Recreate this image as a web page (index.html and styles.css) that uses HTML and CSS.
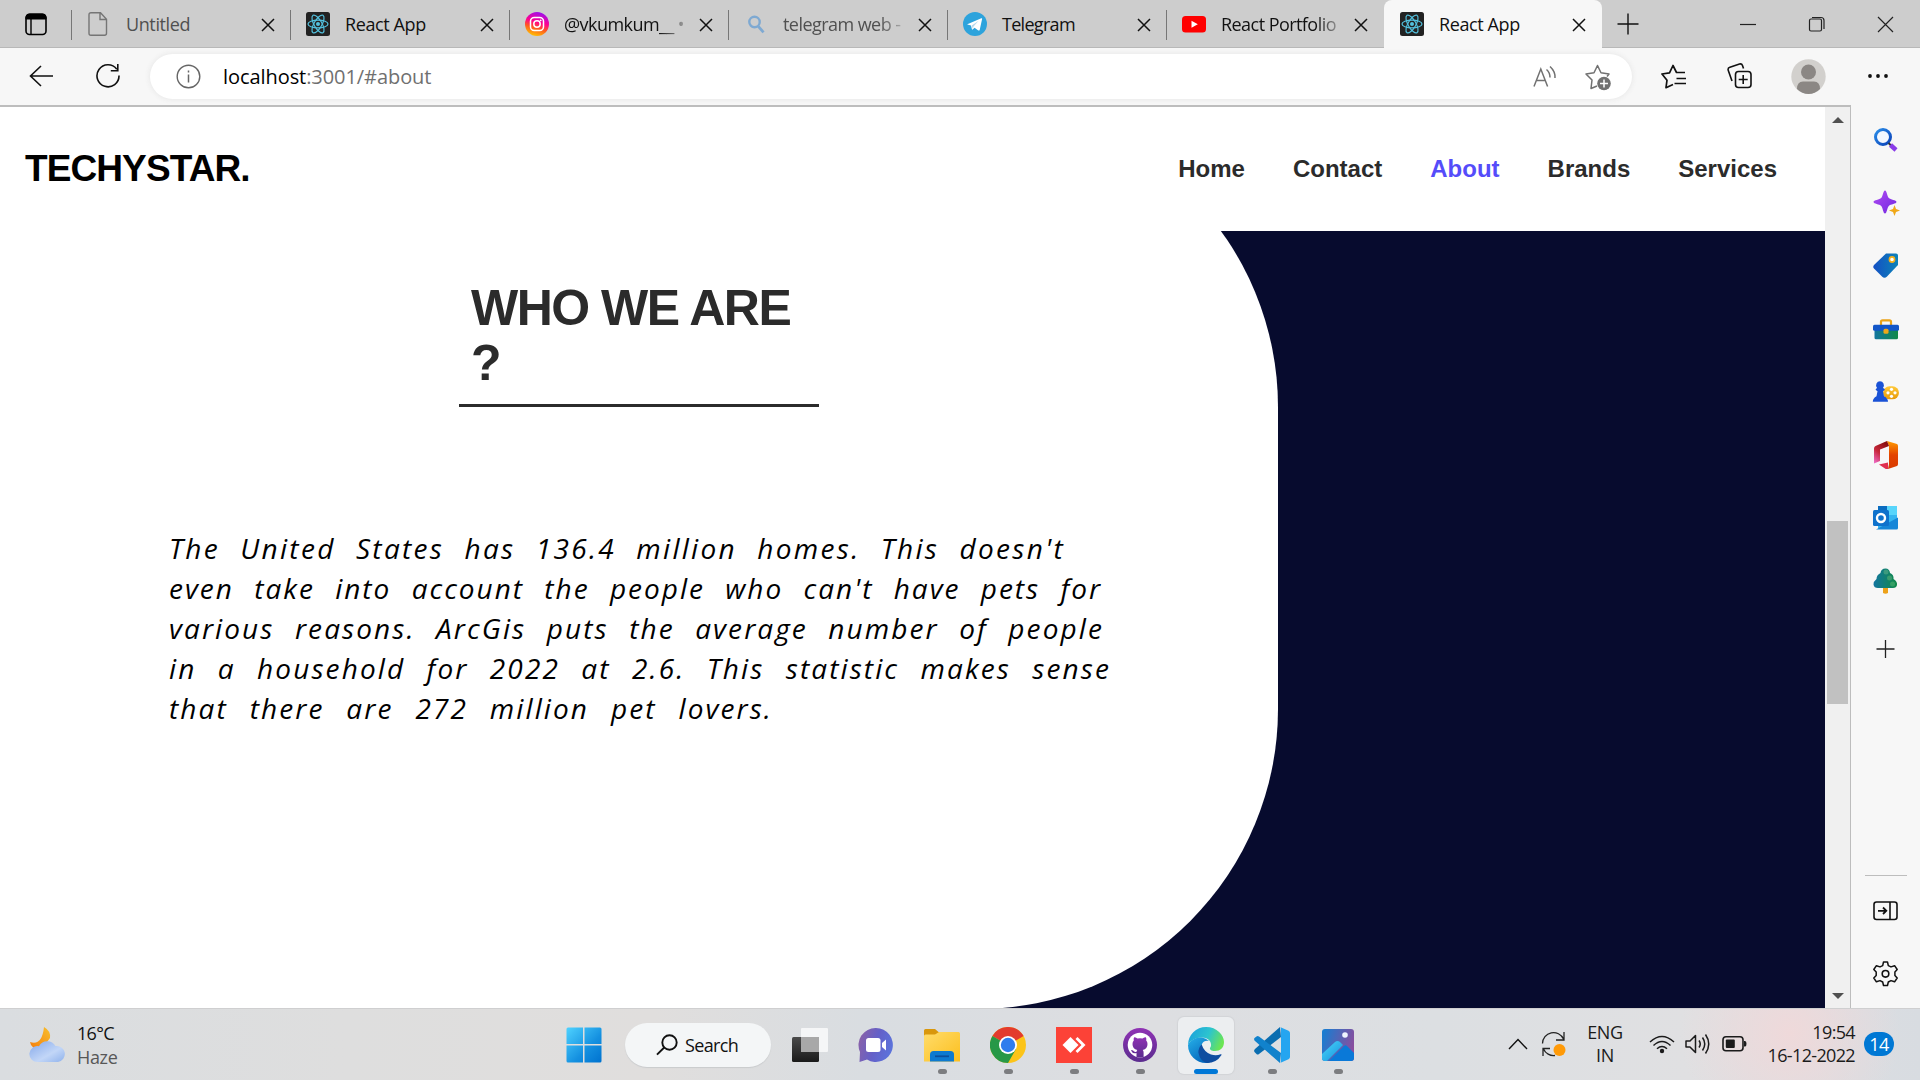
FILE: index.html
```html
<!DOCTYPE html>
<html lang="en">
<head>
<meta charset="utf-8">
<title>React App</title>
<link rel="stylesheet" href="styles.css">
</head>
<body>
<svg class="defs" width="0" height="0" aria-hidden="true">
  <defs>
    <linearGradient id="insta" x1="0.3" y1="1" x2="0.6" y2="0"><stop offset="0" stop-color="#ffc800"/><stop offset=".35" stop-color="#ff5a1f"/><stop offset=".6" stop-color="#ff0090"/><stop offset="1" stop-color="#9a12ee"/></linearGradient>
    <linearGradient id="win" x1="0" y1="0" x2="1" y2="1"><stop offset="0" stop-color="#4fd2ff"/><stop offset=".6" stop-color="#1490e0"/><stop offset="1" stop-color="#0072cf"/></linearGradient>
    <linearGradient id="blue" x1="0" y1="0" x2="1" y2="1"><stop offset="0" stop-color="#2b8de8"/><stop offset="1" stop-color="#0a41b8"/></linearGradient>
    <linearGradient id="tag" x1="0" y1="0" x2="1" y2="0"><stop offset="0" stop-color="#1450c4"/><stop offset="1" stop-color="#0c82b8"/></linearGradient>
    <linearGradient id="violet" x1="0" y1="0" x2="1" y2="1"><stop offset="0" stop-color="#b04bf2"/><stop offset="1" stop-color="#7028e0"/></linearGradient>
    <linearGradient id="green" x1="0" y1="0" x2="1" y2="0"><stop offset="0" stop-color="#1275a0"/><stop offset="1" stop-color="#128a48"/></linearGradient>
    <linearGradient id="gold" x1="0" y1="0" x2="0" y2="1"><stop offset="0" stop-color="#ffc93a"/><stop offset="1" stop-color="#e89a08"/></linearGradient>
    <linearGradient id="office" x1="0" y1="0" x2="0" y2="1"><stop offset="0" stop-color="#ff9a00"/><stop offset=".5" stop-color="#e34300"/><stop offset="1" stop-color="#d83b01"/></linearGradient>
    <linearGradient id="officeL" x1="0.6" y1="0" x2="0" y2="1"><stop offset="0" stop-color="#8a0f10"/><stop offset=".5" stop-color="#c8283c"/><stop offset="1" stop-color="#f070d0"/></linearGradient>
    <linearGradient id="chat" x1="0" y1="0.3" x2="1" y2="0.6"><stop offset="0" stop-color="#8a62a8"/><stop offset=".5" stop-color="#6460c8"/><stop offset="1" stop-color="#5b74dc"/></linearGradient>
    <linearGradient id="folder" x1="0" y1="0" x2="1" y2="1"><stop offset="0" stop-color="#ffdc6b"/><stop offset="1" stop-color="#fcbf1e"/></linearGradient>
    <linearGradient id="edgeTop" x1="0" y1="0.2" x2="1" y2="0.5"><stop offset="0" stop-color="#1ba0dc"/><stop offset=".55" stop-color="#2cc4cf"/><stop offset="1" stop-color="#6be553"/></linearGradient>
    <linearGradient id="edgeL" x1="0" y1="0" x2="0.6" y2="1"><stop offset="0" stop-color="#27b0e8"/><stop offset="1" stop-color="#0468bd"/></linearGradient>
    <linearGradient id="github" x1="0" y1="0" x2="0" y2="1"><stop offset="0" stop-color="#8f32b4"/><stop offset="1" stop-color="#5b2d8f"/></linearGradient>
    <linearGradient id="photo" x1="0" y1="0.3" x2="1" y2="0.6"><stop offset="0" stop-color="#1a7cd0"/><stop offset="1" stop-color="#8d4c9c"/></linearGradient>
    <linearGradient id="hill" x1="0" y1="0" x2="1" y2="1"><stop offset="0" stop-color="#4ad6f7"/><stop offset="1" stop-color="#1590e0"/></linearGradient>
    <linearGradient id="cloud" x1="0" y1="0" x2="1" y2="1"><stop offset="0" stop-color="#84a8ea"/><stop offset=".6" stop-color="#c2d6f7"/><stop offset="1" stop-color="#8fb2ec"/></linearGradient>
    <linearGradient id="moon" x1="0" y1="1" x2="1" y2="0"><stop offset="0" stop-color="#f47b0a"/><stop offset="1" stop-color="#f8c02e"/></linearGradient>
    <linearGradient id="dark" x1="0" y1="0" x2="0" y2="1"><stop offset="0" stop-color="#4a4a4a"/><stop offset="1" stop-color="#1a1a1a"/></linearGradient>
    <symbol id="react" viewBox="0 0 24 24"><rect width="24" height="24" rx="2.5" fill="#222"/><g fill="none" stroke="#53c1de" stroke-width="1.2"><ellipse cx="12" cy="12" rx="10" ry="3.9"/><ellipse cx="12" cy="12" rx="10" ry="3.9" transform="rotate(60 12 12)"/><ellipse cx="12" cy="12" rx="10" ry="3.9" transform="rotate(120 12 12)"/></g><circle cx="12" cy="12" r="2" fill="#53c1de"/></symbol>
    <symbol id="x" viewBox="0 0 14 14"><path d="M1 1l12 12M13 1L1 13" fill="none" stroke="#111" stroke-width="1.5"/></symbol>
  </defs>
</svg>

<div class="screen">
  <div class="tabstrip">
    <svg class="workspaces" width="22" height="23" viewBox="0 0 22 23"><rect x="1" y="1.2" width="20" height="20.3" rx="3.5" fill="none" stroke="#000" stroke-width="1.6"/><path d="M1 6V4.500Q1 1 4.500 1h13Q21 1 21 4.500V6z" stroke="#000"/><path d="M6 6v15" stroke="#000" stroke-width="1.4"/></svg>
    <div class="tab"><svg class="fav" viewBox="0 0 24 24"><path d="M5.500.8h8l6 6.500v14q0 2-2 2H4q-2 0-2-2v-18.500q0-2 2-2zM13 1v6.500h6.500" fill="none" stroke="#757575" stroke-width="1.4"/></svg><span class="tab-title dim">Untitled</span><svg class="tab-x"><use href="#x"/></svg></div>
    <div class="tab"><svg class="fav"><use href="#react"/></svg><span class="tab-title">React App</span><svg class="tab-x"><use href="#x"/></svg></div>
    <div class="tab"><svg class="fav" viewBox="0 0 24 24"><circle cx="12" cy="12" r="12" fill="url(#insta)"/><rect x="5.500" y="5.500" width="13" height="13" rx="3.800" fill="none" stroke="#fff" stroke-width="1.500"/><circle cx="12" cy="12" r="3.200" fill="none" stroke="#fff" stroke-width="1.500"/><circle cx="15.700" cy="8.300" r=".9" fill="#fff"/></svg><span class="tab-title fade tight">@vkumkum__ •</span><svg class="tab-x"><use href="#x"/></svg></div>
    <div class="tab"><svg class="fav" viewBox="0 0 24 24"><circle cx="10.500" cy="10" r="5.200" fill="none" stroke="#7ea9d2" stroke-width="2.400"/><path d="M14.300 14.300l5.200 6" stroke="#7ea9d2" stroke-width="2.800"/></svg><span class="tab-title dim fade tight">telegram web -</span><svg class="tab-x"><use href="#x"/></svg></div>
    <div class="tab"><svg class="fav" viewBox="0 0 24 24"><circle cx="12" cy="12" r="12" fill="#2da3dc"/><path d="M4.300 12.200L18.300 6.300q1-.3.8.8l-2.400 10.800q-.4 1.100-1.400.5l-3.700-2.700-2 1.900q-.5.4-.7-.3l-.9-3.700-3.600-1.100q-.6-.2-.1-.3z" fill="#fff"/><path d="M8.700 13.400l7-4.700-5.200 5.700-.7 2.400z" fill="#b7d9ec"/></svg><span class="tab-title telegram">Telegram</span><svg class="tab-x"><use href="#x"/></svg></div>
    <div class="tab narrow"><svg class="fav" viewBox="0 0 24 24"><rect y="4" width="24" height="16.500" rx="3.500" fill="#f00"/><path d="M9.500 8.700v7l6.300-3.500z" fill="#fff"/></svg><span class="tab-title fade tight">React Portfolio</span><svg class="tab-x"><use href="#x"/></svg></div>
    <div class="tab narrow active"><svg class="fav"><use href="#react"/></svg><span class="tab-title">React App</span><svg class="tab-x"><use href="#x"/></svg></div>
    <svg class="newtab" width="22" height="22" viewBox="0 0 22 22"><path d="M11 .5v21M.5 11h21" stroke="#111" stroke-width="1.400"/></svg>
    <svg class="winbtns" width="154" height="18" viewBox="0 0 154 18"><g fill="none" stroke="#222" stroke-width="1.200"><path d="M0 9.500h16"/><rect x="69.500" y="4" width="12" height="12" rx="1.500"/><path d="M72 2.500h9q3 0 3 3v8.500"/><path d="M138 2l15 15M153 2l-15 15"/></g></svg>
  </div>

  <div class="toolbar">
    <svg class="back" width="25" height="22" viewBox="0 0 25 22"><path d="M24 11H1.500M12 1L1.500 11 12 21" fill="none" stroke="#111" stroke-width="1.600"/></svg>
    <svg class="reload" width="26" height="26" viewBox="0 0 26 26"><path d="M21.800 6.200A11 11 0 1 0 24 12.500M22.800 1v6.800h-7" fill="none" stroke="#111" stroke-width="1.600"/></svg>
    <div class="address">
      <svg width="25" height="25" viewBox="0 0 25 25"><circle cx="12.500" cy="12.500" r="11.300" fill="none" stroke="#666" stroke-width="1.400"/><path d="M12.500 10.500v8M12.500 6.500v2" stroke="#666" stroke-width="1.500"/></svg>
      <span class="url"><b>localhost</b>:3001/#about</span>
      <svg class="aloud" width="24" height="24" viewBox="0 0 24 24"><g fill="none" stroke="#717171" stroke-width="1.500"><path d="M1 21.500L7.800 4 14.600 21.500M3.500 15.500h8.700M13.500 4.500q3.500 3 3.500 8M17 1.500q5.500 5 5 11.500"/></g></svg>
      <svg class="addfav" width="27" height="27" viewBox="0 0 27 27"><path d="M12 22l-6 2.500 1-8.500-6-6 8-1.200L12.500 1.500l3.500 7.300 8 1.200-2 2.500" fill="none" stroke="#717171" stroke-width="1.500" stroke-linejoin="round"/><circle cx="19" cy="19.500" r="6.800" fill="#717171"/><path d="M19 15.500v8M15 19.500h8" stroke="#fff" stroke-width="1.500"/></svg>
    </div>
    <svg class="favs" width="25" height="25" viewBox="0 0 25 25"><path d="M12 20.500L5 23.700l1-7.500L1 10l7.500-1.200L12 1.500l3.500 7h8.500M15.500 14.500H25M13.500 19.500H25" fill="none" stroke="#111" stroke-width="1.700" stroke-linejoin="round"/></svg>
    <svg class="collections" width="26" height="26" viewBox="0 0 26 26"><g fill="none" stroke="#111" stroke-width="1.600"><rect x="8.500" y="8.500" width="15.500" height="16" rx="3"/><path d="M16.200 12v9M11.700 16.500h9M5 18L1.300 7.500q-.8-2.400 1.600-3.200L12.500 1q2.200-.7 3 1.500l1 3"/></g></svg>
    <svg class="avatar" width="35" height="35" viewBox="0 0 35 35"><circle cx="17.500" cy="17.500" r="17.200" fill="#d2d0cd"/><circle cx="17.500" cy="13" r="7.500" fill="#8b8784"/><path d="M6 30q0-7.500 6-7.500h11q6 0 6 7.500-5 5-11.500 5T6 30z" fill="#8b8784"/></svg>
    <svg class="dots" width="22" height="6" viewBox="0 0 22 6"><g fill="#111"><circle cx="3" cy="3" r="1.900"/><circle cx="11" cy="3" r="1.900"/><circle cx="19" cy="3" r="1.900"/></g></svg>
  </div>

  <div class="body">
    <main class="page">
      <header class="site-header">
        <div class="brand">TECHYSTAR.</div>
        <nav class="site-nav"><a>Home</a><a>Contact</a><a class="current">About</a><a>Brands</a><a>Services</a></nav>
      </header>
      <section class="about">
        <div class="about-panel">
          <h1 class="about-title">WHO WE ARE<br>?</h1>
          <div class="about-text">
            <span class="l1">The United States has 136.4 million homes. This doesn't</span>
            <span class="l2">even take into account the people who can't have pets for</span>
            <span class="l3">various reasons. ArcGis puts the average number of people</span>
            <span class="l4">in a household for 2022 at 2.6. This statistic makes sense</span>
            <span class="l5">that there are 272 million pet lovers.</span>
          </div>
        </div>
      </section>
    </main>
    <div class="scrollbar">
      <i class="arrow up"></i><div class="track"><div class="thumb"></div></div><i class="arrow down"></i>
    </div>
    <aside class="sidebar">
      <svg viewBox="0 0 28 28"><circle cx="11" cy="11" r="7.500" fill="#f4f8ff" stroke="url(#blue)" stroke-width="3"/><path d="M16.500 17l3 3" stroke="#333" stroke-width="2"/><path d="M18.500 19l5.500 5" stroke="#8a3ce8" stroke-width="4.500"/></svg>
      <svg viewBox="0 0 28 28"><path d="M13 1.500c1.800 0 2.200 6 3.800 7.600 1.600 1.600 7.700 2.100 7.700 3.900s-6.100 2.300-7.700 3.900c-1.600 1.600-2 7.600-3.800 7.600s-2.200-6-3.800-7.600C7.600 15.300 1.500 14.800 1.500 13s6.100-2.300 7.700-3.900C10.800 7.500 11.200 1.500 13 1.500z" fill="url(#violet)"/><path d="M22.500 16l1.500 4 4 1.500-4 1.500-1.500 4-1.500-4-4-1.500 4-1.500z" fill="#f0a818"/></svg>
      <svg viewBox="0 0 28 28"><path d="M14 1.500h10q2 0 2 2v9.500L15 24.500q-2.500 2.500-5 0L2 16.500q-1.500-1.500 0-3.500z" fill="url(#tag)"/><circle cx="20" cy="7.500" r="2.600" fill="#fff" stroke="#f2b01c" stroke-width="1.600"/></svg>
      <svg viewBox="0 0 28 28"><g transform="translate(0 1.300)"><path d="M9 9V5.500q0-1.500 1.500-1.500h7q1.500 0 1.500 1.500V9" fill="none" stroke="#eba317" stroke-width="2.200"/><rect x="2.500" y="11" width="23.500" height="12" rx="1.500" fill="url(#green)"/><rect x="1" y="8.500" width="26" height="6" rx="1.500" fill="#1256c8"/><rect x="11.500" y="12.500" width="5" height="5" rx="1.500" fill="#f0a818"/></g></svg>
      <svg viewBox="0 0 28 28"><g transform="translate(0 1.300)"><rect x="11" y="7" width="16" height="13" rx="6.500" fill="url(#gold)"/><g fill="#fff"><circle cx="19.500" cy="10" r="1.600"/><circle cx="19.500" cy="17" r="1.600"/><circle cx="16" cy="13.500" r="1.600"/><circle cx="23" cy="13.500" r="1.600"/></g><path d="M8 2a4 4 0 0 1 3 6.500l2 2-2 1.500 1 5q4 2 4 5.500H.8Q.8 19 4.500 17l1-5-2-1.500 1.500-2A4 4 0 0 1 8 2z" fill="#1a52d6"/></g></svg>
      <svg viewBox="0 0 28 28"><path d="M15 0l10 3q1 .5 1 2v18q0 1.500-1 2l-9 3 1-5V5z" fill="url(#office)"/><path d="M15 0l2 5L8 8.500V20l-6 2.500V7.500Q2 5.500 3.500 5z" fill="url(#officeL)"/><path d="M7 23.500l9-2v6.500q-2 .5-3-.5z" fill="#e03050"/></svg>
      <svg viewBox="0 0 28 28"><rect x="6" y="2" width="19" height="23" rx="1.500" fill="#35b5f0"/><path d="M6 2h9v9H6z" fill="#0a6cc0"/><path d="M15 2h10v9H15z" fill="#58d5fb"/><path d="M4 25.500l22-12V24q0 1.500-1.500 1.500z" fill="#1686d8"/><rect x="1" y="6" width="16" height="16" rx="1.500" fill="#0f72cc"/><circle cx="9" cy="14" r="4" fill="none" stroke="#fff" stroke-width="2.400"/></svg>
      <svg viewBox="0 0 28 28"><path d="M11 19h5v7q-2.500 1.500-5 0z" fill="#eda21a"/><path d="M13.500 1.500q4 0 4.500 4.500 4 1.500 3.500 6 4 2.500 3.500 6-.5 3-4 3H6q-4 0-4.500-3.500-.2-3 3-5.500 0-4 4-6 .5-4.500 5-4.500z" fill="url(#green)"/><circle cx="14" cy="5" r="2.500" fill="#3c9a7e"/><circle cx="17.500" cy="11" r="2.500" fill="#3a9c6e"/><circle cx="20.500" cy="17" r="2.500" fill="#35a065"/></svg>
      <svg class="add" viewBox="0 0 28 28"><path d="M13.500 5v18M4.500 14h18" stroke="#222" stroke-width="1.300"/></svg>
      <div class="divider"></div>
      <svg viewBox="0 0 28 28"><g fill="none" stroke="#111" stroke-width="1.600"><rect x="2" y="5" width="23" height="17.500" rx="2.500"/><path d="M18 5v17.500"/><path d="M6 13.800h8M11 10.500l3.300 3.300L11 17" stroke-width="1.800"/></g></svg>
      <svg class="gear" viewBox="0 0 28 28"><path d="M11.500 2h4l.8 3.600 2.700 1.300 3.600-1.200 2.600 3.800-2.300 2.500v3.500l2.300 2.500-2.600 3.800-3.600-1.200-2.700 1.400-.8 3.500h-4l-.8-3.500L8 20.600l-3.600 1.200L1.800 18l2.400-2.500V12L1.800 9.500l2.600-3.800L8 6.900l2.700-1.300z" fill="none" stroke="#111" stroke-width="1.500" stroke-linejoin="round"/><circle cx="13.500" cy="13.800" r="3.300" fill="none" stroke="#111" stroke-width="1.600"/></svg>
    </aside>
  </div>

  <footer class="taskbar">
    <div class="weather">
      <svg width="38" height="38" viewBox="0 0 38 38"><path d="M15 1q7 4 6 11l-9 12Q2 23 1 16q12 4 14-15z" fill="url(#moon)"/><path d="M9 36a8 8 0 1 1 1-15.800A9.500 9.500 0 0 1 26.500 20 8 8 0 1 1 29 36z" fill="url(#cloud)"/></svg>
      <div class="weather-text"><span>16°C</span><span class="muted">Haze</span></div>
    </div>
    <div class="apps">
      <div class="app"><svg viewBox="0 0 36 36"><path d="M2 .5h15V17H.5V2Q.5.500 2 .5zM18.500.5H34q1.500 0 1.500 1.500v15h-17zM.5 18.500H17v17H2q-1.500 0-1.500-1.500zM18.500 18.500h17V34q0 1.500-1.500 1.500H18.500z" fill="url(#win)"/></svg></div>
      <div class="search"><svg width="22" height="22" viewBox="0 0 22 22"><circle cx="13.500" cy="8.500" r="7.200" fill="none" stroke="#111" stroke-width="1.900"/><path d="M8.200 13.500L1 20.700" stroke="#111" stroke-width="1.900"/></svg><span>Search</span></div>
      <div class="app"><svg viewBox="0 0 36 36"><rect y="10" width="27" height="25" rx="1.500" fill="url(#dark)"/><rect x="9" y="1" width="27" height="24" rx="1" fill="#fff" opacity=".72"/><path d="M9 10h18v15H9z" fill="#a8a8a8"/></svg></div>
      <div class="app"><svg viewBox="0 0 36 36"><path d="M18 1a17 17 0 1 1-9 31.500L1.500 35 2 25A17 17 0 0 1 18 1z" fill="url(#chat)"/><rect x="8" y="11" width="14.500" height="14" rx="2.500" fill="#fff"/><path d="M24 16l4-3.500v11L24 20z" fill="#fff"/></svg></div>
      <div class="app run"><svg viewBox="0 0 36 36"><path d="M0 3.500Q0 2 1.500 2H11l3.500 3H34v8H0z" fill="#d9970c"/><path d="M0 9q0-1.500 1.500-1.500h9.500L15 5h19.500Q36 5 36 6.500V34.500H0z" fill="url(#folder)"/><path d="M6 34.500v-7q0-3.500 3.500-3.500h17q3.500 0 3.500 3.500v7z" fill="#0d7ad0"/><path d="M11 29.300h14" stroke="#0b4f9c" stroke-width="1.800"/></svg></div>
      <div class="app run"><svg viewBox="0 0 36 36"><circle cx="18" cy="18" r="18" fill="#fcc419"/><path d="M18 18L2.400 9A18 18 0 0 1 33.600 9z" fill="#e33b2e"/><path d="M18 18L2.400 9A18 18 0 0 0 18 36l8-14z" fill="#279847"/><circle cx="18" cy="18" r="9" fill="#fff"/><circle cx="18" cy="18" r="7.200" fill="#2f7ded"/></svg></div>
      <div class="app run"><svg viewBox="0 0 36 36"><path d="M0 0h36v36H0z" fill="#fc4237"/><path d="M6.500 18l8-8 8 8-8 8zM19.500 12l2-2 8 8-8 8-2-2 6-6z" fill="#fff"/></svg></div>
      <div class="app run"><svg viewBox="0 0 36 36"><circle cx="18" cy="18" r="17" fill="url(#github)"/><circle cx="18" cy="18" r="12.300" fill="#fff"/><path d="M14.500 30v-4q-4 1-5.500-2.500.5-.8 2 0 1.500 2 3.500 1.200.2-1.200.8-1.700-4.800-.8-4.800-6 0-2 1.300-3.400-.4-1.800.3-3.300 1.600 0 3.400 1.300 2.500-.6 5 0 1.800-1.300 3.400-1.300.7 1.500.3 3.300 1.300 1.400 1.300 3.400 0 5.200-4.800 6 .9.800.9 2.500V30z" fill="url(#github)"/></svg></div>
      <div class="app run focus"><svg viewBox="0 0 36 36"><path d="M0 18A18 18 0 0 1 18 0c11 0 18 8 18 15 0 6-4 9-9 9-4 0-5.500-1.500-5-3 1-1.500 1-2 1-3.500 0-4-4-7-9-7Q4 10.500 0 18z" fill="url(#edgeTop)"/><path d="M0 18Q4 10 14 10.500q4 .5 7 3.500-5-1-7 3-3 7 2 13 2 3 6 5.500Q19 36 18 36A18 18 0 0 1 0 18z" fill="url(#edgeL)"/><path d="M13.700 17.500Q10 21 10.500 26q1.500 8 8.500 10 9.500 0 14.500-8 .3-1-.8-.7Q28 29 23 27.500q-7-2.500-9.300-10z" fill="#0f4da0"/></svg></div>
      <div class="app run"><svg viewBox="0 0 36 36"><path d="M26 0l1 10L5 27q-1.500 1-2.500 0L.5 25q-1-1.500.5-3z" fill="#0a6db0"/><path d="M26 36l1-10L5 9.500q-1.500-1-2.500 0L.5 11q-1 1.500.5 3z" fill="#1182cc"/><path d="M26 0l8.500 3.800Q36 4.500 36 6v24q0 1.500-1.500 2.200L26 36q1 0 1-2V2q0-2-1-2z" fill="#25a5f0"/></svg></div>
      <div class="app run"><svg viewBox="0 0 36 36"><rect x="2" y="2" width="32" height="32" rx="3" fill="url(#photo)"/><circle cx="25" cy="8" r="2.800" fill="#eef4ff"/><path d="M9 34l15-15q1.500-1.500 3 0l7 7v5q0 3-3 3z" fill="#0a79d8"/><path d="M2 27l13-12q2.500-2 5 0l3 3L7 34H5q-3 0-3-3z" fill="url(#hill)"/></svg></div>
    </div>
    <div class="tray">
      <svg class="chev" width="20" height="12" viewBox="0 0 20 12"><path d="M1 11l9-9.500L19 11" fill="none" stroke="#111" stroke-width="1.400"/></svg>
      <svg class="sync" width="26" height="26" viewBox="0 0 26 26"><path d="M1.500 12.500A11 11 0 0 1 22.500 8M23 1v8h-8M9 17.500H2V25M2.500 18A11 11 0 0 0 14 24.500" fill="none" stroke="#222" stroke-width="1.300"/><circle cx="18.500" cy="19" r="6" fill="#ff9a08"/></svg>
      <div class="lang"><span>ENG</span><span>IN</span></div>
      <svg class="wifi" width="26" height="20" viewBox="0 0 26 20"><g fill="none" stroke="#1b1b1b" stroke-width="1.500"><path d="M1 8q12-11 24 0"/><path d="M4.500 11.500q8.500-8 17 0"/><path d="M8 14.800q5-4.500 10 0"/></g><circle cx="13" cy="17" r="2.200" fill="#1b1b1b"/></svg>
      <svg class="vol" width="26" height="22" viewBox="0 0 26 22"><g fill="none" stroke="#1b1b1b" stroke-width="1.500"><path d="M1 8h4l5.500-5.500v17L5 14H1z" stroke-linejoin="round"/><path d="M14 7.500q2.500 3.500 0 7M17.500 4.500q4.500 6.500 0 13M20.500 1.500q6.500 9.500 0 19"/></g></svg>
      <svg class="batt" width="26" height="18" viewBox="0 0 26 18"><rect x="1" y="1.800" width="20" height="14" rx="3" fill="none" stroke="#1b1b1b" stroke-width="1.600"/><rect x="3.800" y="4.500" width="9" height="8.500" rx="1" fill="#1b1b1b"/><path d="M22 6h1q1.500 0 1.500 2.800T23 11.500h-1z" fill="#1b1b1b"/></svg>
      <div class="clock"><span>19:54</span><span>16-12-2022</span></div>
      <div class="badge">14</div>
    </div>
  </footer>
</div>
</body>
</html>
```
FILE: styles.css
```css
* { box-sizing: border-box; }
body { margin: 0; overflow: hidden; font-family: "Open Sans", "Noto Sans", sans-serif; color: #111; }
svg { display: block; flex: none; }
.defs { position: absolute; }
.screen { width: 1920px; height: 1080px; display: flex; flex-direction: column; }

/* Tab strip */
.tabstrip { height: 48px; flex: none; display: flex; align-items: center; background: #cdcdcd; box-shadow: inset 0 -1px #b8b8b8; }
.workspaces { margin: 0 24px 0 25px; }
.tab { width: 219px; height: 48px; flex: none; display: flex; align-items: center; padding-left: 16px;
  background: linear-gradient(#777, #777) 0 10px / 1px 30px no-repeat; }
.tab.narrow { width: 218px; }
.fav { width: 24px; height: 24px; }
.tab-title { width: 120px; margin-left: 15px; white-space: nowrap; font-size: 18px; line-height: 26px; letter-spacing: -0.4px; }
.tab-title.telegram { letter-spacing: -0.7px; }
.tab-title.tight { letter-spacing: -0.55px; }
.tab-title.dim { color: #505050; }
.narrow .tab-title { width: 118px; }
.fade { -webkit-mask-image: linear-gradient(90deg, #000 80%, rgba(0, 0, 0, 0.25) 100%); mask-image: linear-gradient(90deg, #000 80%, rgba(0, 0, 0, 0.25) 100%); }
.tab-x { width: 14px; height: 14px; margin: 1px 0 0 15px; }
.tab.active { background: #f7f7f7; border-radius: 8px 8px 0 0; }
.newtab { margin-left: 15px; }
.winbtns { margin-left: 101px; }

/* Toolbar */
.toolbar { height: 59px; flex: none; display: flex; align-items: center; background: #f7f7f7; padding-bottom: 3px; position: relative; }
.toolbar::after { content: ""; position: absolute; left: 0; bottom: 0; width: 1851px; height: 2px; background: #bdbdbd; }
.back { margin-left: 29px; }
.reload { margin-left: 41px; }
.address { width: 1482px; height: 45px; margin: 1px 0 0 29px; padding-left: 26px; display: flex; align-items: center; background: #fff; border-radius: 23px; box-shadow: 0 0 5px 1px #e9e9e9; }
.url { margin-left: 22px; font-size: 20px; letter-spacing: -0.07px; color: #707070; }
.url b { font-weight: 400; color: #000; }
.aloud { margin-left: auto; }
.addfav { margin: 2px 20px 0 28px; }
.favs { margin-left: 29px; }
.collections { margin-left: 41px; }
.avatar { margin-left: 38px; }
.dots { margin-left: 41px; }

/* Viewport row */
.body { height: 901px; flex: none; display: flex; }
.page { width: 1825px; height: 901px; overflow: hidden; display: grid; grid-template-rows: 124px 777px; background: #fff; }
.site-header { z-index: 1; display: flex; align-items: center; justify-content: space-between; padding: 0 48px 0 25px; background: #fff; font-family: "Liberation Sans", Arial, sans-serif; font-weight: 700; }
.brand { font-size: 37px; letter-spacing: -0.9px; color: #000; }
.site-nav { display: flex; gap: 48px; font-size: 24px; color: #2b2b2b; }
.site-nav .current { color: #554cfa; }
.about { height: 902px; margin-top: -124px; background: #070b2e; }
.about-panel { width: 1278px; height: 902px; padding: 174px 0 0 168px; background: #fff; border-radius: 0 300px 300px 0; }
.about-title { width: 360px; height: 126px; margin: 0 0 0 291px; padding-left: 12px; border-bottom: 3px solid #2b2b2b; color: #2b2b2b; font: 700 50px/55px "Liberation Sans", Arial, sans-serif; letter-spacing: -1.5px; }
.about-text { margin: 121px 0 0 1px; font-size: 28px; line-height: 40px; font-style: italic; color: #000; }
.about-text span { display: block; white-space: nowrap; text-align: justify; text-align-last: justify; }
.about-text .l1 { width: 896px; letter-spacing: 2.3px; }
.about-text .l2 { width: 933px; letter-spacing: 2px; }
.about-text .l3 { width: 935px; letter-spacing: 2.1px; }
.about-text .l4 { width: 942px; letter-spacing: 2.1px; }
.about-text .l5 { width: 604px; letter-spacing: 2.1px; }

.scrollbar { width: 26px; display: flex; flex-direction: column; align-items: center; padding: 10px 0 9px; background: #f0f0f0; border-right: 1px solid #bdbdbd; }
.arrow { width: 0; height: 0; border: 6px solid transparent; border-top-width: 0; border-bottom-width: 0; }
.arrow.up { border-bottom: 6px solid #505050; }
.arrow.down { border-top: 6px solid #505050; }
.track { flex: 1; width: 21px; padding-top: 398px; }
.thumb { height: 183px; background: #c1c1c1; }

.sidebar { width: 69px; display: flex; flex-direction: column; padding: 19px 0 0 21px; background: #f7f7f7; }
.sidebar svg { width: 28px; height: 28px; margin-bottom: 35px; }
.sidebar .add { margin: 5px 0 0; }
.divider { width: 42px; height: 1px; margin: 212px 0 21px -7px; background: #bdbdbd; }
.sidebar .gear { margin-bottom: 0; }

/* Taskbar */
.taskbar { height: 72px; flex: none; display: flex; box-shadow: inset 0 1px #cfcfd0;
  background: radial-gradient(circle 110px at 1790px 25px, #efd9da, rgba(239, 217, 218, 0)), linear-gradient(90deg, #dadde0, #dedede 18%, #e0dedd 34%, #d9dde1 45%, #dddee1 60%, #dcdfe2 75%, #e0e0e2 88%, #d8dce1); }
.weather { width: 551px; display: flex; align-items: flex-start; padding: 18px 0 0 29px; }
.weather-text { display: flex; flex-direction: column; margin: -5px 0 0 10px; font-size: 18px; line-height: 24px; letter-spacing: -0.7px; }
.muted { color: #575757; letter-spacing: -0.35px; }
.apps { display: flex; align-items: center; }
.app { width: 66px; height: 72px; padding: 19px 15px 0; position: relative; }
.app svg { width: 36px; height: 36px; position: relative; }
.run::after { content: ""; position: absolute; left: 29px; top: 61px; width: 9px; height: 5px; border-radius: 3px; background: #7c7d80; }
.focus::before { content: ""; position: absolute; left: 5px; top: 9px; width: 56px; height: 57px; border-radius: 6px; background: #eceef0; box-shadow: 0 0 1px 1px #d2d4d7; }
.focus::after { left: 21px; width: 24px; background: #0078d7; }
.search { width: 146px; height: 44px; margin: 2px 6px 0 8px; display: flex; align-items: center; padding-left: 31px; border-radius: 22px; background: #f4f6f7; box-shadow: 0 1px 1px #c9cbcd; font-size: 18px; letter-spacing: -0.65px; }
.search span { margin-left: 7px; }
.tray { margin-left: auto; display: flex; align-items: center; padding-right: 26px; color: #1b1b1b; font-size: 18px; line-height: 23px; letter-spacing: -0.65px; }
.sync { margin-left: 13px; }
.lang, .clock { display: flex; flex-direction: column; }
.lang { width: 40px; margin-left: 18px; align-items: center; letter-spacing: -0.3px; }
.wifi { margin-left: 24px; }
.vol { margin-left: 10px; }
.batt { margin-left: 11px; }
.clock { width: 89px; margin: 0 9px 0 18px; align-items: flex-end; }
.badge { width: 30px; height: 24px; border-radius: 12px; background: #0078d4; color: #fff; text-align: center; line-height: 24px; }
```
